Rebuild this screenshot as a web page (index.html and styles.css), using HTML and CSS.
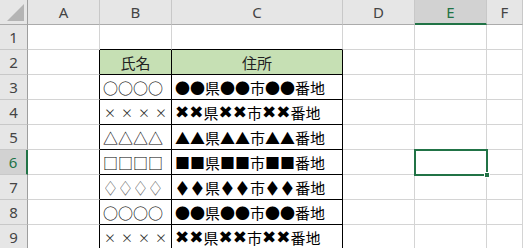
FILE: index.html
```html
<!DOCTYPE html>
<html lang="ja">
<head>
    <meta charset="UTF-8">
    <title>Sheet1</title>
    <link rel="stylesheet" href="styles.css">
</head>
<body>
    <div class="sheet">
        <!-- 列見出し -->
        <div class="corner"><span class="tri"></span></div>
        <div class="colhead">A</div>
        <div class="colhead">B</div>
        <div class="colhead">C</div>
        <div class="colhead">D</div>
        <div class="colhead active">E</div>
        <div class="colhead">F</div>

        <!-- 1 -->
        <div class="rowhead">1</div>
        <div class="cell"></div>
        <div class="cell above"></div>
        <div class="cell above"></div>
        <div class="cell"></div>
        <div class="cell"></div>
        <div class="cell"></div>

        <!-- 2 -->
        <div class="rowhead">2</div>
        <div class="cell before"></div>
        <div class="cell tbl head">氏名</div>
        <div class="cell tbl head">住所</div>
        <div class="cell"></div>
        <div class="cell"></div>
        <div class="cell"></div>

        <!-- 3 -->
        <div class="rowhead">3</div>
        <div class="cell before"></div>
        <div class="cell tbl">○○○○</div>
        <div class="cell tbl">●●県●●市●●番地</div>
        <div class="cell"></div>
        <div class="cell"></div>
        <div class="cell"></div>

        <!-- 4 -->
        <div class="rowhead">4</div>
        <div class="cell before"></div>
        <div class="cell tbl small">××××</div>
        <div class="cell tbl"><span class="x">✖✖</span>県<span class="x">✖✖</span>市<span class="x">✖✖</span>番地</div>
        <div class="cell"></div>
        <div class="cell"></div>
        <div class="cell"></div>

        <!-- 5 -->
        <div class="rowhead">5</div>
        <div class="cell before"></div>
        <div class="cell tbl">△△△△</div>
        <div class="cell tbl">▲▲県▲▲市▲▲番地</div>
        <div class="cell"></div>
        <div class="cell"></div>
        <div class="cell"></div>

        <!-- 6 -->
        <div class="rowhead active">6</div>
        <div class="cell before"></div>
        <div class="cell tbl">□□□□</div>
        <div class="cell tbl">■■県■■市■■番地</div>
        <div class="cell"></div>
        <div class="cell selected"><span class="handle"></span></div>
        <div class="cell"></div>

        <!-- 7 -->
        <div class="rowhead">7</div>
        <div class="cell before"></div>
        <div class="cell tbl thin"><span class="d">◇</span><span class="d">◇</span><span class="d">◇</span><span class="d">◇</span></div>
        <div class="cell tbl"><span class="d">◆</span><span class="d">◆</span>県<span class="d">◆</span><span class="d">◆</span>市<span class="d">◆</span><span class="d">◆</span>番地</div>
        <div class="cell"></div>
        <div class="cell"></div>
        <div class="cell"></div>

        <!-- 8 -->
        <div class="rowhead">8</div>
        <div class="cell before"></div>
        <div class="cell tbl">○○○○</div>
        <div class="cell tbl">●●県●●市●●番地</div>
        <div class="cell"></div>
        <div class="cell"></div>
        <div class="cell"></div>

        <!-- 9 -->
        <div class="rowhead">9</div>
        <div class="cell before"></div>
        <div class="cell tbl small">××××</div>
        <div class="cell tbl"><span class="x">✖✖</span>県<span class="x">✖✖</span>市<span class="x">✖✖</span>番地</div>
        <div class="cell"></div>
        <div class="cell"></div>
        <div class="cell"></div>
    </div>
</body>
</html>
```

FILE: styles.css
```css
* {
    margin: 0;
    padding: 0;
    box-sizing: border-box;
}

body {
    background-color: white;
    overflow: hidden;
    font-family: "Noto Sans CJK JP", "Noto Sans", sans-serif;
}

.sheet {
    display: grid;
    grid-template-columns: 28px 72px 72px 171px 72px 72px 1fr;
    grid-auto-rows: 25px;
    width: 523px;
}

.corner {
    background-color: #e6e6e6;
    border-right: 1px solid #9e9e9e;
    border-bottom: 1px solid #ababab;
    position: relative;
}

.corner .tri {
    position: absolute;
    right: 3px;
    bottom: 3px;
    width: 0;
    height: 0;
    border-left: 17px solid transparent;
    border-bottom: 17px solid #b4b4b4;
}

.colhead {
    background-color: #e6e6e6;
    border-right: 1px solid #c8c8c8;
    border-bottom: 1px solid #ababab;
    color: #444;
    font-family: "Noto Sans", sans-serif;
    font-size: 15px;
    display: flex;
    align-items: center;
    justify-content: center;
}

.colhead.active {
    background-color: #d2d2d2;
    color: #217346;
    border-bottom: 2px solid #217346;
}

.rowhead {
    background-color: #e6e6e6;
    border-right: 1px solid #9e9e9e;
    border-bottom: 1px solid #c8c8c8;
    color: #444;
    font-family: "Noto Sans", sans-serif;
    font-size: 15px;
    display: flex;
    align-items: center;
    justify-content: center;
}

.rowhead.active {
    background-color: #d2d2d2;
    color: #217346;
    border-right: 2px solid #217346;
}

.cell {
    border-right: 1px solid #d4d4d4;
    border-bottom: 1px solid #d4d4d4;
    font-size: 15px;
    color: #000;
    display: flex;
    align-items: center;
    padding-left: 3px;
    white-space: nowrap;
    overflow: hidden;
}

.cell.before {
    border-right-color: #000;
}

.cell.above {
    border-bottom-color: #000;
}

.cell.tbl {
    border-right-color: #000;
    border-bottom-color: #000;
}

.cell.head {
    background-color: #c6e0b4;
    justify-content: center;
    padding-left: 0;
    color: #222;
}

.cell.small {
    font-size: 12px;
    letter-spacing: 5px;
    color: #333;
    padding-left: 4px;
}

.cell.thin {
    color: #555;
}

.d {
    display: inline-block;
    transform: scaleX(0.72);
}

.x {
    font-family: "DejaVu Sans", sans-serif;
    font-size: 17px;
}

.selected {
    position: relative;
    overflow: visible;
}

.selected::after {
    content: "";
    position: absolute;
    left: -1px;
    top: -1px;
    right: -2px;
    bottom: -2px;
    border: 2px solid #217346;
}

.selected .handle {
    position: absolute;
    right: -4px;
    bottom: -4px;
    width: 6px;
    height: 6px;
    background-color: #217346;
    border: 1px solid white;
    z-index: 2;
}
```
